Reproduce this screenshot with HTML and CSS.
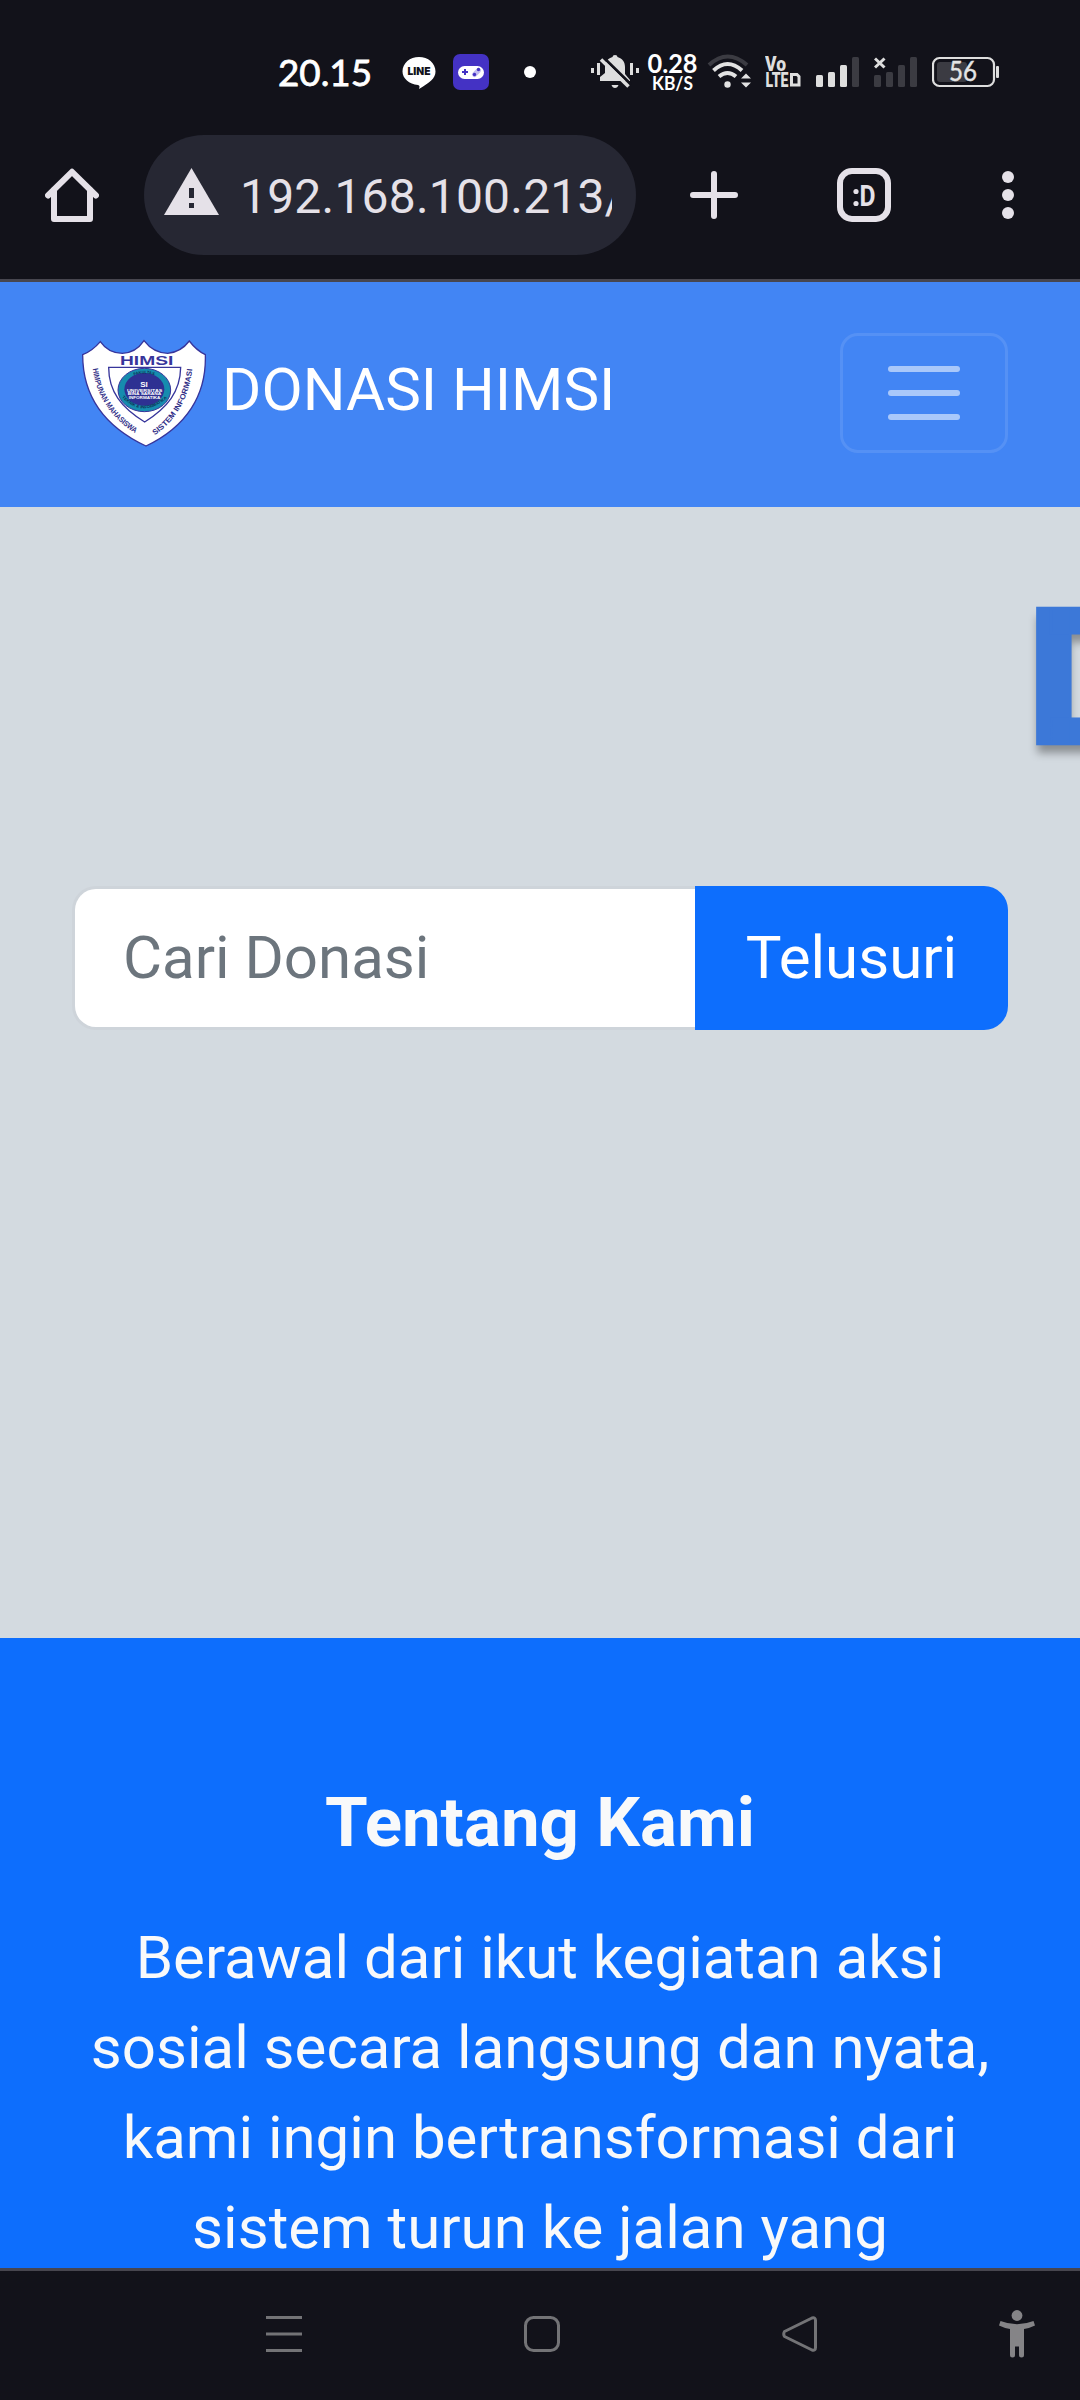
FILE: index.html
```html
<!DOCTYPE html>
<html lang="id">
<head>
<meta charset="utf-8">
<title>Donasi HIMSI</title>
<link rel="stylesheet" href="styles.css">
</head>
<body>
<div class="status-bar">
  <svg class="time" width="100" height="70" viewBox="275 37 100 70"><text class="clock" x="278" y="86" textLength="94" lengthAdjust="spacingAndGlyphs">20.15</text></svg>
  <svg class="line" width="34" height="70" viewBox="402 37 34 70"><path fill="#fff" d="M419 57c9 0 16.500 6 16.500 14.500 0 7-6 11-16.500 17.500 1-3 .5-3.500-1-4-9-1-15.500-6.500-15.500-13.500C402.500 63 410 57 419 57z"/><text class="line-name" x="407.500" y="75" textLength="23" lengthAdjust="spacingAndGlyphs">LINE</text></svg>
  <svg class="game" width="36" height="70" viewBox="453 37 36 70"><rect x="453" y="54" width="36" height="36" rx="7" fill="#4432c4"/><rect x="458" y="66" width="26" height="13" rx="6.500" fill="#fff"/><path d="M462 72h6M465 69v6" stroke="#4432c4" stroke-width="2"/><path d="M474.500 74.500l4-4" stroke="#c3bdf0" stroke-width="5" stroke-linecap="round"/><circle cx="478.500" cy="69.500" r="1.700" fill="#4432c4"/><circle cx="474.500" cy="74.500" r="1.700" fill="#4432c4"/></svg>
  <svg class="dot" width="12" height="70" viewBox="524 37 12 70"><circle cx="530" cy="72" r="6" fill="#fff"/></svg>
  <svg class="mute" width="50" height="70" viewBox="590 37 50 70" fill="#dedede"><path d="M612.500 57q0-2 2.500-2t2.500 2c5 1.500 7.500 5 7.500 10v7l5 6v1h-30v-4l5-4v-6c0-5 2.500-8.500 7.500-10zM611.500 85h7q-1 3-3.500 3t-3.500-3z"/><path d="M603.500 57.500L631 84.500" stroke="#12121a" stroke-width="3"/><path d="M601 59.500L628.500 86.500" stroke="#dedede" stroke-width="3.500"/><path d="M591 68h3v5h-3zM597 63h3v12h-3zM630 63h3v12h-3zM636 68h3v5h-3z"/></svg>
  <svg class="speed" width="52" height="70" viewBox="647 37 52 70"><text class="speed-value" x="647.500" y="72.500" textLength="50" lengthAdjust="spacingAndGlyphs">0.28</text><text class="speed-unit" x="652" y="90" textLength="41" lengthAdjust="spacingAndGlyphs">KB/S</text></svg>
  <svg class="wifi" width="45" height="70" viewBox="707 37 45 70" fill="none" stroke-width="4"><path stroke="#3b3b42" d="M709 65Q727.500 48 747 65"/><path stroke="#e2e2e2" d="M713.500 70.500Q727.500 57.500 742 70.500M719 76.500Q727.500 69.500 736 76.500"/><circle cx="727.500" cy="84.500" r="3.200" fill="#e2e2e2"/><path fill="#e2e2e2" d="M741 78.500l5-5 5 5zM741 82.500h10l-5 5z"/></svg>
  <svg class="volte" width="36" height="70" viewBox="765 37 36 70" fill="none" stroke="#dedede" stroke-width="3"><text class="volte-text" x="765" y="70.500" textLength="21" lengthAdjust="spacingAndGlyphs">Vo</text><text class="volte-text" x="765.500" y="86.500" textLength="23" lengthAdjust="spacingAndGlyphs">LTE</text><path d="M791.500 74.500h5.500l2 2v8.500h-7.500z"/></svg>
  <svg class="signal" width="44" height="70" viewBox="816 37 44 70" fill="#dedede"><rect x="816" y="75" width="7" height="12" rx="1.500"/><rect x="828" y="72" width="7" height="15" rx="1.500"/><rect x="840" y="65" width="7" height="22" rx="1.500"/><rect x="852" y="57" width="7" height="30" rx="1.500" fill="#3b3b42"/></svg>
  <svg class="signal-two" width="44" height="70" viewBox="874 37 44 70" fill="#3b3b42"><rect x="874" y="75" width="7" height="12" rx="1.500"/><rect x="886" y="72" width="7" height="15" rx="1.500"/><rect x="898" y="65" width="7" height="22" rx="1.500"/><rect x="910" y="57" width="7" height="30" rx="1.500"/><path d="M875 58.500l9.500 9M884.500 58.500l-9.500 9" stroke="#dedede" stroke-width="3"/></svg>
  <svg class="battery" width="68" height="70" viewBox="932 37 68 70"><rect x="937" y="62" width="30" height="20" rx="3" fill="#3b3b42"/><rect x="933" y="58" width="61" height="28" rx="6.500" fill="none" stroke="#dedede" stroke-width="2.200"/><rect x="996" y="66" width="3" height="12" rx="1" fill="#dedede"/><text class="charge" x="949" y="81" textLength="28" lengthAdjust="spacingAndGlyphs">56</text></svg>
</div>

<div class="toolbar">
  <svg class="home" width="54" height="54" viewBox="0 0 54 54" fill="none" stroke="#e5e1e8" stroke-width="6" stroke-linejoin="round" stroke-linecap="round"><path d="M3 27.500L27 3.800 51 27.500"/><path d="M9 22v29h36V22"/></svg>
  <div class="omnibox">
    <svg width="55" height="47" viewBox="0 0 55 47"><path fill="#e5e1e8" d="M27.500 0L55 47H0z"/><path fill="#262733" d="M25 20h5v10h-5zM25 35h5v5h-5z"/></svg>
    <span class="url">192.168.100.213/</span>
  </div>
  <svg class="plus" width="48" height="48" viewBox="0 0 48 48" stroke="#e5e1e8" stroke-width="6" stroke-linecap="round"><path d="M24 3v42M3 24h42"/></svg>
  <div class="tabs"><svg width="24" height="26" viewBox="0 0 24 26"><circle cx="4" cy="9.500" r="2.600" fill="#e5e1e8"/><circle cx="4" cy="21.500" r="2.600" fill="#e5e1e8"/><text class="tab-face" x="7.500" y="23.500" textLength="16" lengthAdjust="spacingAndGlyphs">D</text></svg></div>
  <svg class="more" width="12" height="48" viewBox="0 0 12 48" fill="#e5e1e8"><circle cx="6" cy="6" r="6"/><circle cx="6" cy="24" r="6"/><circle cx="6" cy="42" r="6"/></svg>
</div>

<nav class="navbar">
  <svg class="logo" width="125" height="110" viewBox="66 54 375 330">
    <path fill="#fff" stroke="#37359b" stroke-width="4" d="M68 104Q96 94 121 65Q145 100 187 100Q227 99 252 62Q280 99 323 100Q362 97 388 63Q409 91 436 104C440 224 380 320 258 378C135 320 68 230 68 104z"/>
    <path fill="#fff" stroke="#37359b" stroke-width="4" d="M146 142H362C361 215 323 262 254 306C184 263 146 215 146 142z"/>
    <text class="logo-title" x="180" y="135" textLength="160" lengthAdjust="spacingAndGlyphs">HIMSI</text>
    <ellipse cx="253" cy="210" rx="79" ry="65" fill="#168cae" stroke="#37359b" stroke-width="3"/>
    <ellipse cx="253" cy="208" rx="60" ry="49" fill="#2e3192"/>
    <defs>
      <path id="arc-left" d="M98 146Q115 272 232 344"/>
      <path id="arc-right" d="M284 346Q385 274 397 142"/>
      <path id="arc-top" d="M204 176Q252 145 304 176"/>
      <path id="arc-bottom" d="M186 232Q250 299 324 232"/>
    </defs>
    <text class="logo-ring"><textPath href="#arc-left" textLength="240" lengthAdjust="spacingAndGlyphs">HIMPUNAN MAHASISWA</textPath></text>
    <text class="logo-ring"><textPath href="#arc-right" textLength="236" lengthAdjust="spacingAndGlyphs">SISTEM INFORMASI</textPath></text>
    <text class="logo-tiny"><textPath href="#arc-top" startOffset="20">FAKULTAS</textPath></text>
    <text class="logo-tiny"><textPath href="#arc-bottom" textLength="154" lengthAdjust="spacingAndGlyphs">TEKNIK &amp; INFORMATIKA</textPath></text>
    <text class="logo-si" x="252" y="200">SI</text>
    <text class="logo-line" x="201" y="216" textLength="106" lengthAdjust="spacingAndGlyphs">UNIVERSITAS</text>
    <text class="logo-line" x="203" y="226" textLength="101" lengthAdjust="spacingAndGlyphs">BINA SARANA</text>
    <text class="logo-line" x="206" y="236" textLength="95" lengthAdjust="spacingAndGlyphs">INFORMATIKA</text>
  </svg>
  <span class="brand">DONASI HIMSI</span>
  <button class="toggler" type="button" aria-label="Menu"><span></span><span></span><span></span></button>
</nav>

<header class="hero">
  <div class="marquee"><span class="marquee-text">D</span></div>
  <form class="search">
    <input type="text" class="search-input" placeholder="Cari Donasi">
    <button type="button" class="search-button">Telusuri</button>
  </form>
</header>

<section class="about">
  <h2>Tentang Kami</h2>
  <p>Berawal dari ikut kegiatan aksi<br>sosial secara langsung dan nyata,<br>kami ingin bertransformasi dari<br>sistem turun ke jalan yang</p>
</section>

<div class="system-nav">
  <svg class="recents" width="36" height="36" viewBox="0 0 36 36" stroke="#737376" stroke-width="3"><path d="M0 1.500h36M0 18h36M0 34.500h36"/></svg>
  <svg class="home-key" width="36" height="36" viewBox="0 0 36 36" fill="none" stroke="#737376" stroke-width="3"><rect x="1.500" y="1.500" width="33" height="33" rx="8"/></svg>
  <svg class="back" width="36" height="36" viewBox="0 0 36 36" fill="none" stroke="#737376" stroke-width="3" stroke-linejoin="round"><path d="M2.500 15.500L30 2Q33.500 1 33.500 4.500V31.500Q33.500 35 30 34L2.500 20.500Q1 18 2.500 15.500z"/></svg>
  <svg class="access" width="36" height="48" viewBox="0 0 36 48" fill="#858487"><circle cx="18" cy="5.500" r="5.400"/><path d="M1.500 11Q18 17.500 34.500 11L36 15.500Q31 18 25 19V45Q25 47.500 22.500 47.500T20 45V36.500H16V45Q16 47.500 13.500 47.500T11 45V19Q5 18 0 15.500z"/></svg>
</div>
</body>
</html>
```
FILE: styles.css
```css
* { box-sizing: border-box; }
body {
  margin: 0;
  width: 1080px;
  height: 2400px;
  overflow: hidden;
  display: flex;
  flex-direction: column;
  font-family: Roboto, "Liberation Sans", sans-serif;
  background: #12121a;
}
svg { display: block; flex: none; }

/* status bar */
.status-bar { height: 107px; padding: 37px 0 0 275px; display: flex; flex: none; }
.line { margin-left: 27px; }
.game { margin-left: 17px; }
.dot { margin-left: 35px; }
.mute { margin-left: 54px; }
.speed { margin-left: 7px; }
.wifi { margin-left: 8px; }
.volte { margin-left: 13px; }
.signal { margin-left: 15px; }
.signal-two { margin-left: 14px; }
.battery { margin-left: 14px; }
.clock { font: 400 37px Lato, sans-serif; fill: #fff; stroke: #fff; stroke-width: .8px; }
.line-name { font: 900 11px Inter, sans-serif; fill: #12121a; }
.speed-value { font: 700 26px Lato, sans-serif; fill: #fff; }
.speed-unit { font: 700 19.5px Lato, sans-serif; fill: #fff; }
.volte-text { font: 900 20px Roboto, sans-serif; fill: #dedede; stroke: none; }
.charge { font: 400 26px Lato, sans-serif; fill: #e4e4e4; stroke: #e4e4e4; stroke-width: .4px; }

/* browser toolbar */
.toolbar {
  height: 175px;
  padding: 28px 66px 24px 45px;
  border-bottom: 3px solid #47464f;
  display: flex;
  align-items: center;
  flex: none;
}
.omnibox {
  width: 492px;
  height: 120px;
  margin-left: 45px;
  padding: 0 24px 0 20px;
  border-radius: 60px;
  background: #262733;
  display: flex;
  align-items: center;
  flex: none;
}
.omnibox svg { margin-top: -7px; }
.url {
  margin: 3px 0 0 21px;
  width: 372px;
  overflow: hidden;
  white-space: nowrap;
  font-size: 48px;
  line-height: 60px;
  color: #e5e1e8;
  letter-spacing: .2px;
}
.plus { margin-left: 54px; }
.tabs {
  width: 54px;
  height: 54px;
  margin-left: 99px;
  border: 6px solid #e5e1e8;
  border-radius: 15px;
  display: flex;
  align-items: center;
  justify-content: center;
}
.tab-face { font: 700 30px Roboto, sans-serif; fill: #e5e1e8; }
.more { margin-left: 111px; }

/* site navbar */
.navbar {
  height: 225px;
  padding: 0 72px 0 82px;
  background: #4285f4;
  display: flex;
  align-items: center;
  flex: none;
}
.logo { margin-top: -3px; }
.logo-title { font: 700 38px "Liberation Sans", sans-serif; fill: #37359b; }
.logo-ring { font: 700 23px "Liberation Sans", sans-serif; fill: #2f2d86; }
.logo-tiny { font: 700 12px "Liberation Sans", sans-serif; fill: #0d2c50; }
.logo-si { font: 700 24px "Liberation Sans", sans-serif; fill: #fff; text-anchor: middle; }
.logo-line { font: 700 12px "Liberation Sans", sans-serif; fill: #fff; }
.brand { margin: -10px auto 0 15px; font-size: 60px; line-height: 90px; color: #fff; }
.toggler {
  width: 168px;
  height: 120px;
  margin-top: -3px;
  padding: 0;
  border: 3px solid rgba(255, 255, 255, .1);
  border-radius: 18px;
  background: none;
  display: flex;
  flex-direction: column;
  align-items: center;
  justify-content: center;
  gap: 18px;
}
.toggler span { width: 72px; height: 6px; border-radius: 3px; background: rgba(255, 255, 255, .55); }

/* hero with running title and search */
.hero { height: 1131px; background: #d3dae0; flex: none; overflow: hidden; }
.marquee { height: 379px; padding: 57px 0 0 1027px; overflow: hidden; }
.marquee-text {
  display: block;
  font-size: 192px;
  line-height: 230px;
  font-weight: 900;
  color: #3c78d8;
  -webkit-text-stroke: 2.500px #3c78d8;
  text-shadow: 0 9px 9px rgba(0, 0, 0, .35);
}
.search { margin: 0 72px; height: 144px; display: flex; }
.search-input {
  flex: 1;
  min-width: 0;
  padding: 0 48px 2px;
  border: 3px solid #ced4da;
  border-right: 0;
  border-radius: 24px 0 0 24px;
  background: #fff;
  font: 400 60px Roboto, sans-serif;
}
.search-input::placeholder { color: #6c757d; opacity: 1; }
.search-button {
  width: 313px;
  padding: 0 0 2px;
  border: 0;
  border-radius: 0 24px 24px 0;
  background: #0d6efd;
  color: #fff;
  font: 400 60px Roboto, sans-serif;
}

/* about */
.about { height: 630px; padding: 144px 36px 0; background: #0d6efd; color: #f8f9fa; text-align: center; flex: none; overflow: hidden; }
.about h2 { margin: 0 0 49px; font-size: 69px; line-height: 82px; font-weight: 700; }
.about p { margin: 0; font-size: 60px; line-height: 90px; }

/* system navigation */
.system-nav {
  height: 132px;
  padding: 0 45px 3px 266px;
  border-top: 3px solid #47464f;
  display: flex;
  align-items: center;
  flex: none;
}
.home-key { margin-left: 222px; }
.back { margin-left: 222px; }
.access { margin-left: auto; }
```
